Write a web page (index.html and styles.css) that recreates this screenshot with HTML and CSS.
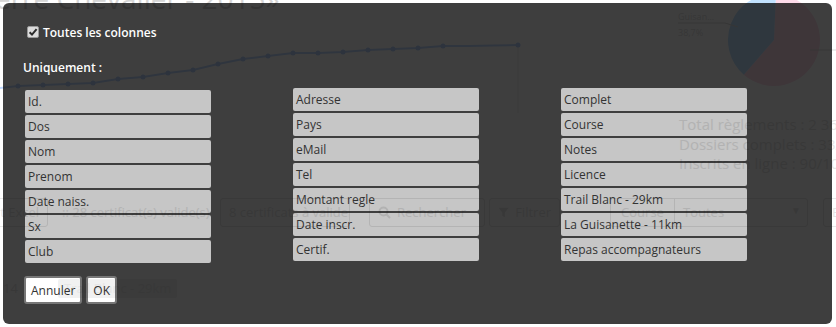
FILE: index.html
```html
<!DOCTYPE html>
<html lang="fr">
<head>
    <meta charset="UTF-8">
    <meta name="viewport" content="width=device-width, initial-scale=1.0">
    <title>Inscriptions - Colonnes</title>
    <link rel="stylesheet" href="styles.css">
</head>
<body>
    <!-- Page derrière la fenêtre -->
    <div class="page">
        <div class="dash">
            <div class="left">
                <h1>Pierre Chevalier - 2015»</h1>
                <svg class="chart" width="560" height="105" viewBox="0 0 560 105">
                    <polyline class="line" points="0,75 18,73 43,72 68,71 93,70 118,66 143,64 168,60 193,57 218,51 243,46 268,43 293,40 318,40 343,39 368,37 393,36 418,35 443,33 468,33 493,32.5 518,32"/>
                    <line class="axis" x1="518" y1="32" x2="518" y2="100"/>
                    <g class="dots">
                        <circle cx="18" cy="73" r="2.5"/><circle cx="43" cy="72" r="2.5"/>
                        <circle cx="68" cy="71" r="2.5"/><circle cx="93" cy="70" r="2.5"/>
                        <circle cx="118" cy="66" r="2.5"/><circle cx="143" cy="64" r="2.5"/>
                        <circle cx="168" cy="60" r="2.5"/><circle cx="193" cy="57" r="2.5"/>
                        <circle cx="218" cy="51" r="2.5"/><circle cx="243" cy="46" r="2.5"/>
                        <circle cx="268" cy="43" r="2.5"/><circle cx="293" cy="40" r="2.5"/>
                        <circle cx="318" cy="40" r="2.5"/><circle cx="343" cy="39" r="2.5"/>
                        <circle cx="368" cy="37" r="2.5"/><circle cx="393" cy="36" r="2.5"/>
                        <circle cx="418" cy="35" r="2.5"/><circle cx="443" cy="33" r="2.5"/>
                        <circle cx="518" cy="32" r="2.5"/>
                    </g>
                </svg>
            </div>
            <div class="side">
                <svg class="pie" width="276" height="120" viewBox="0 0 276 120">
                    <path class="pie-red" d="M214,57 L216,11 A46,46 0 1,1 183.8,91.7 Z"/>
                    <path class="pie-blue" d="M214,57 L183.8,91.7 A46,46 0 0,1 216,11 Z"/>
                    <text x="118" y="37">Guisan...</text>
                    <text x="118" y="53">38,7%</text>
                    <polyline class="lbl" points="118,40 165,40 178,44"/>
                    <line class="lbl" x1="250" y1="67" x2="276" y2="67"/>
                </svg>
                <div class="stats">
                    <p>Total règlements : 2 360 €</p>
                    <p>Dossiers complets : 33/100</p>
                    <p>Inscrits en ligne : 90/100</p>
                </div>
            </div>
        </div>

        <div class="toolbar">
            <span class="btn btn-excel">Export Excel</span>
            <span class="count">:: 28 certificat(s) valide(s)</span>
            <span class="btn btn-certif">8 certificats à valider</span>
            <span class="search">
                <svg width="13" height="13" viewBox="0 0 13 13"><circle cx="5.5" cy="5.5" r="4" fill="none" stroke="currentColor" stroke-width="2"/><line x1="8.5" y1="8.5" x2="12" y2="12" stroke="currentColor" stroke-width="2"/></svg>
                Rechercher
            </span>
            <span class="btn btn-filter">
                <svg width="13" height="13" viewBox="0 0 13 13"><path d="M0.5 1 H12.5 L8 6.5 V12 L5 10.5 V6.5 Z" fill="currentColor"/></svg>
                Filtrer
            </span>
            <span class="group">
                <span class="addon">Course</span>
                <span class="select">Toutes <span class="caret">▼</span></span>
            </span>
            <span class="btn btn-send">Envoyer</span>
        </div>

        <div class="list">
            <span class="num">14</span>
            <span class="badge">Trail Blanc - 29km</span>
        </div>
    </div>

    <!-- Fenêtre de choix des colonnes -->
    <div class="modal">
        <label class="all">
            <span class="check">
                <svg width="12" height="12" viewBox="0 0 12 12"><path d="M2.6 6.2 L5 8.6 L9.6 3.2" fill="none" stroke="#2b2b2b" stroke-width="2"/></svg>
            </span>
            Toutes les colonnes
        </label>

        <p class="only">Uniquement :</p>

        <div class="cols">
            <div class="col">
                <div class="item">Id.</div>
                <div class="item">Dos</div>
                <div class="item">Nom</div>
                <div class="item">Prenom</div>
                <div class="item">Date naiss.</div>
                <div class="item">Sx</div>
                <div class="item">Club</div>
            </div>
            <div class="col">
                <div class="item">Adresse</div>
                <div class="item">Pays</div>
                <div class="item">eMail</div>
                <div class="item">Tel</div>
                <div class="item">Montant regle</div>
                <div class="item">Date inscr.</div>
                <div class="item">Certif.</div>
            </div>
            <div class="col">
                <div class="item">Complet</div>
                <div class="item">Course</div>
                <div class="item">Notes</div>
                <div class="item">Licence</div>
                <div class="item">Trail Blanc - 29km</div>
                <div class="item">La Guisanette - 11km</div>
                <div class="item">Repas accompagnateurs</div>
            </div>
        </div>

        <div class="actions">
            <button type="button">Annuler</button>
            <button type="button">OK</button>
        </div>
    </div>
</body>
</html>
```

FILE: styles.css
```css
        /* General */
        body {
            margin: 0;
            background: #fff;
            font-family: 'Open Sans', sans-serif;
            color: #e6e6e6;
            overflow: hidden;
            height: 327px;
        }

        /* Page derrière */
        .page {
            margin-top: -17px;
            white-space: nowrap;
        }

        .dash {
            display: flex;
            align-items: flex-start;
        }

        .left {
            width: 560px;
        }

        h1 {
            margin: 0 0 0 -29px;
            font-size: 28px;
            line-height: 30px;
            font-weight: normal;
            color: #d6d6d6;
        }

        .chart {
            display: block;
        }

        .chart .line {
            fill: none;
            stroke: #c1d9ff;
            stroke-width: 2;
        }

        .chart .axis {
            stroke: #ececec;
        }

        .chart .dots {
            fill: #b8d0fa;
        }

        .side {
            width: 276px;
            overflow: hidden;
        }

        .pie {
            display: block;
        }

        .pie-red {
            fill: #ffdbea;
        }

        .pie-blue {
            fill: #c1e2ff;
        }

        .pie text {
            font-size: 9px;
            fill: #e0e0e0;
        }

        .pie .lbl {
            fill: none;
            stroke: #dadada;
        }

        .stats {
            margin-top: 12px;
            padding-left: 119px;
            font-size: 15px;
            line-height: 19.5px;
            color: #e6e6e6;
        }

        .stats p {
            margin: 0;
        }

        /* Barre d'outils */
        .toolbar {
            display: flex;
            align-items: center;
            margin-top: 24px;
            height: 29px;
            font-size: 13px;
        }

        .btn, .search, .group {
            box-sizing: border-box;
            height: 29px;
            display: flex;
            align-items: center;
            gap: 6px;
            border: 1px solid #e8e8e8;
            border-radius: 3px;
            padding: 0 8px;
            overflow: hidden;
            flex-shrink: 0;
        }

        .btn-excel {
            width: 98px;
            margin-left: -50px;
            justify-content: flex-end;
        }

        .count {
            width: 150px;
            margin-left: 14px;
            flex-shrink: 0;
        }

        .btn-certif {
            width: 130px;
            margin-left: 8px;
        }

        .search {
            width: 116px;
            margin-left: 19px;
        }

        .btn-filter {
            width: 71px;
            margin-left: 4px;
        }

        .group {
            width: 198px;
            margin-left: 50px;
            padding: 0;
            gap: 0;
        }

        .addon {
            width: 63px;
            height: 100%;
            display: flex;
            align-items: center;
            justify-content: center;
            border-right: 1px solid #e8e8e8;
        }

        .select {
            flex: 1;
            display: flex;
            justify-content: space-between;
            padding: 0 6px 0 8px;
        }

        .caret {
            font-size: 10px;
        }

        .btn-send {
            width: 80px;
            margin-left: 15px;
        }

        .list {
            display: flex;
            align-items: center;
            margin-top: 52px;
            font-size: 13px;
        }

        .num {
            width: 55px;
            padding-left: 3px;
        }

        .badge {
            height: 19px;
            line-height: 19px;
            padding: 0 6px;
            background: #f1f1f1;
            border-radius: 2px;
        }

        /* Fenêtre des colonnes */
        .modal {
            position: fixed;
            top: 3px;
            left: 3px;
            width: 829px;
            height: 321px;
            box-sizing: border-box;
            padding: 20px;
            background: #3e3e3e;
            border-radius: 6px;
            mix-blend-mode: multiply;
            font-family: 'Open Sans', sans-serif;
            font-size: 12px;
            color: #fff;
        }

        .all {
            display: flex;
            align-items: center;
            gap: 4px;
            height: 18px;
            margin-left: 4px;
            font-weight: 600;
        }

        .check {
            width: 12px;
            height: 12px;
            box-sizing: border-box;
            background: #dcdcdc;
            border: 1px solid #9a9a9a;
            border-radius: 2px;
            display: flex;
        }

        .check svg {
            margin: -1px;
        }

        .only {
            margin: 18px 0 0;
            line-height: 18px;
            font-weight: 600;
        }

        .cols {
            display: flex;
            gap: 82px;
            margin: 11px 0 0 2px;
        }

        .col {
            width: 186px;
        }

        .col:first-child {
            margin-top: 2px;
        }

        .item {
            height: 23px;
            line-height: 23px;
            margin-bottom: 2px;
            padding-left: 3px;
            background: #c6c6c6;
            border-radius: 2px;
            color: #333;
        }

        .actions {
            display: flex;
            gap: 4px;
            margin: 11px 0 0 1px;
        }

        .actions button {
            height: 28px;
            padding: 0 5px;
            background: #fff;
            border: 2px solid #777;
            border-radius: 3px;
            font-family: 'Open Sans', sans-serif;
            font-size: 12px;
            color: #333;
        }
```
